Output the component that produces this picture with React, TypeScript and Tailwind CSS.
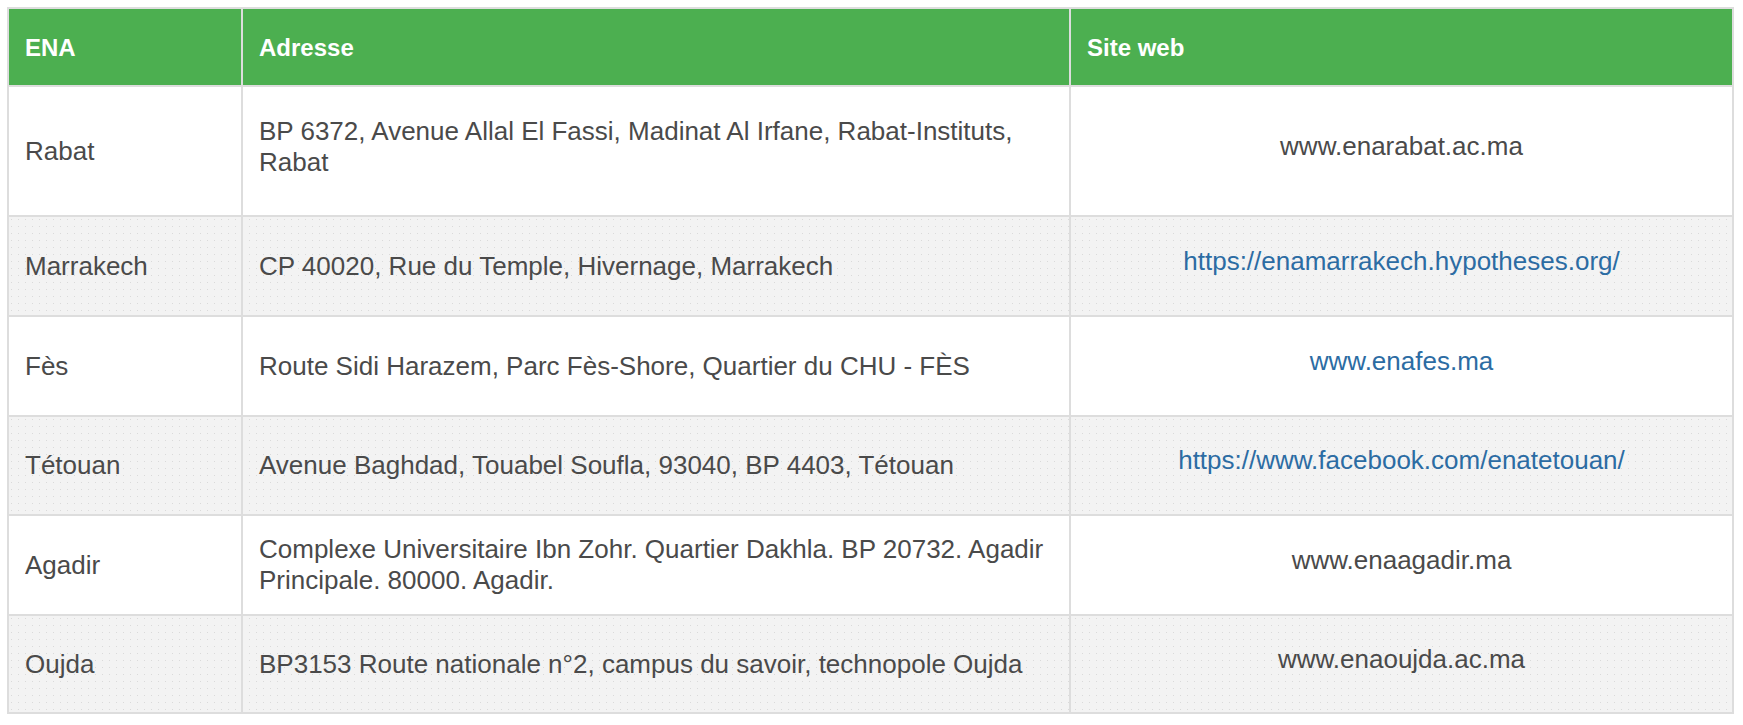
const rows = [
  {
    ena: 'Rabat',
    address: 'BP 6372, Avenue Allal El Fassi, Madinat Al Irfane, Rabat-Instituts, Rabat',
    site: 'www.enarabat.ac.ma',
    link: false,
    h: 'h-[130px]',
  },
  {
    ena: 'Marrakech',
    address: 'CP 40020, Rue du Temple, Hivernage, Marrakech',
    site: 'https://enamarrakech.hypotheses.org/',
    link: true,
    h: 'h-[100px]',
  },
  {
    ena: 'Fès',
    address: 'Route Sidi Harazem, Parc Fès-Shore, Quartier du CHU - FÈS',
    site: 'www.enafes.ma',
    link: true,
    h: 'h-[100px]',
  },
  {
    ena: 'Tétouan',
    address: 'Avenue Baghdad, Touabel Soufla, 93040, BP 4403, Tétouan',
    site: 'https://www.facebook.com/enatetouan/',
    link: true,
    h: 'h-[99px]',
  },
  {
    ena: 'Agadir',
    address: 'Complexe Universitaire Ibn Zohr. Quartier Dakhla. BP 20732. Agadir Principale. 80000. Agadir.',
    site: 'www.enaagadir.ma',
    link: false,
    h: 'h-[100px]',
  },
  {
    ena: 'Oujda',
    address: 'BP3153 Route nationale n°2, campus du savoir, technopole Oujda',
    site: 'www.enaoujda.ac.ma',
    link: false,
    h: 'h-[98px]',
  },
];

export default function App() {
  return (
    <div className="min-h-screen bg-white pt-[7px] pl-[7px] font-['Liberation_Sans',Arial,sans-serif]">
      <div className="w-[1727px]">
        <table className="w-full table-fixed border-collapse border-2 border-[#dddddd] text-[26px] leading-[31px] text-[#4a4a4a]">
          <colgroup>
            <col className="w-[234px]" />
            <col className="w-[828px]" />
            <col />
          </colgroup>
          <thead>
            <tr className="h-[78px] bg-[#4caf50] text-[24px] text-white">
              <th className="border-2 border-[#dddddd] px-4 text-left align-middle font-bold">ENA</th>
              <th className="border-2 border-[#dddddd] px-4 text-left align-middle font-bold">Adresse</th>
              <th className="border-2 border-[#dddddd] px-4 text-left align-middle font-bold">Site web</th>
            </tr>
          </thead>
          <tbody>
            {rows.map((r, i) => (
              <tr
                key={r.ena}
                className={
                  r.h +
                  ' ' +
                  (i % 2 === 1
                    ? 'bg-[#f3f3f3] bg-[radial-gradient(circle,#dadada_0.5px,transparent_0.8px)] bg-[length:7px_7px]'
                    : 'bg-white')
                }
              >
                <td className="border-2 border-[#dddddd] px-4 align-middle">{r.ena}</td>
                <td className={'border-2 border-[#dddddd] px-4 align-middle ' + (i === 0 ? 'pb-[8px]' : '')}>
                  {r.address}
                </td>
                <td className="border-2 border-[#dddddd] px-4 pb-[10px] text-center align-middle">
                  <span className={r.link ? 'text-[#2c6ca3]' : ''}>{r.site}</span>
                </td>
              </tr>
            ))}
          </tbody>
        </table>
      </div>
    </div>
  );
}
